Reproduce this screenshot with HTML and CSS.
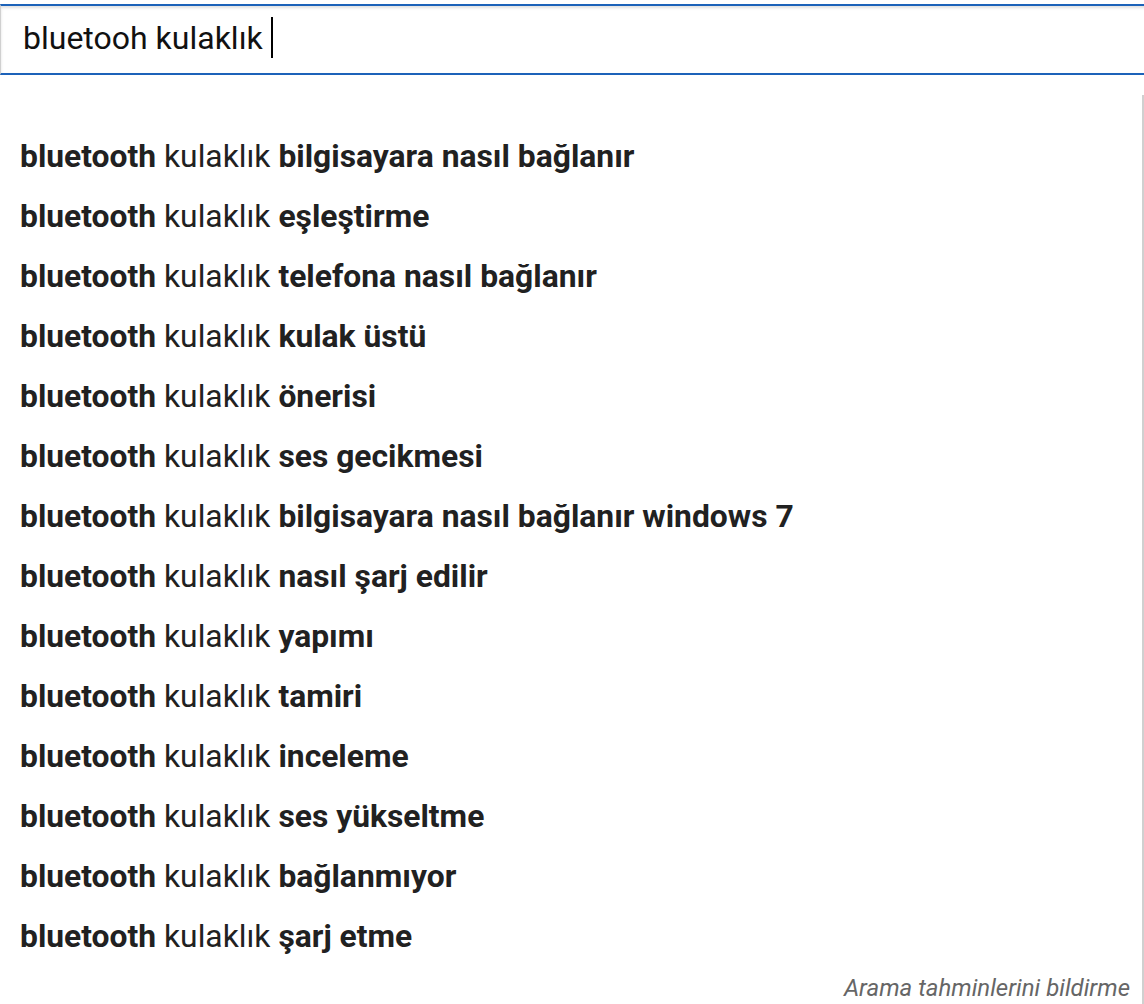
FILE: index.html
```html
<!DOCTYPE html>
<html lang="tr">
<head>
    <meta charset="UTF-8">
    <meta name="viewport" content="width=device-width, initial-scale=1.0">
    <title>Arama</title>
    <link rel="stylesheet" href="styles.css">
</head>
<body>
    <div class="search-box">
        <span class="query">bluetooh kulaklık</span><span class="caret"></span>
    </div>

    <div class="suggestions">
        <ul>
            <li><b>bluetooth</b> kulaklık <b>bilgisayara nasıl bağlanır</b></li>
            <li><b>bluetooth</b> kulaklık <b>eşleştirme</b></li>
            <li><b>bluetooth</b> kulaklık <b>telefona nasıl bağlanır</b></li>
            <li><b>bluetooth</b> kulaklık <b>kulak üstü</b></li>
            <li><b>bluetooth</b> kulaklık <b>önerisi</b></li>
            <li><b>bluetooth</b> kulaklık <b>ses gecikmesi</b></li>
            <li><b>bluetooth</b> kulaklık <b>bilgisayara nasıl bağlanır windows 7</b></li>
            <li><b>bluetooth</b> kulaklık <b>nasıl şarj edilir</b></li>
            <li><b>bluetooth</b> kulaklık <b>yapımı</b></li>
            <li><b>bluetooth</b> kulaklık <b>tamiri</b></li>
            <li><b>bluetooth</b> kulaklık <b>inceleme</b></li>
            <li><b>bluetooth</b> kulaklık <b>ses yükseltme</b></li>
            <li><b>bluetooth</b> kulaklık <b>bağlanmıyor</b></li>
            <li><b>bluetooth</b> kulaklık <b>şarj etme</b></li>
        </ul>
        <div class="report">Arama tahminlerini bildirme</div>
    </div>
</body>
</html>
```

FILE: styles.css
```css
html, body {
    margin: 0;
    padding: 0;
    overflow: hidden;
    background: #fff;
}
body {
    font-family: Roboto, "Liberation Sans", Arial, sans-serif;
    color: #212121;
}
.search-box {
    margin-top: 4px;
    width: calc(100% + 20px);
    height: 63px;
    border-top: 2px solid #1c62b9;
    border-bottom: 2px solid #1c62b9;
    border-left: 1px solid #d0d0d0;
    box-shadow: inset 0 2px 3px rgba(0,0,0,0.12);
    display: flex;
    align-items: center;
    padding-left: 22px;
    padding-bottom: 4px;
    box-sizing: content-box;
    font-size: 32px;
    color: #111;
}
.caret {
    display: inline-block;
    width: 2px;
    height: 41px;
    background: #000;
    margin-left: 8px;
}
.suggestions {
    margin-top: 20px;
    border-right: 2px solid #d0d0d0;
    padding-top: 31px;
}
.suggestions ul {
    list-style: none;
    margin: 0;
    padding: 0;
}
.suggestions li {
    height: 60px;
    line-height: 60px;
    padding-left: 20px;
    font-size: 31.8px;
    white-space: nowrap;
}
.suggestions b {
    font-weight: 700;
}
.report {
    text-align: right;
    padding: 8px 12px 10px 0;
    font-size: 24px;
    font-style: italic;
    color: #666;
}
```
